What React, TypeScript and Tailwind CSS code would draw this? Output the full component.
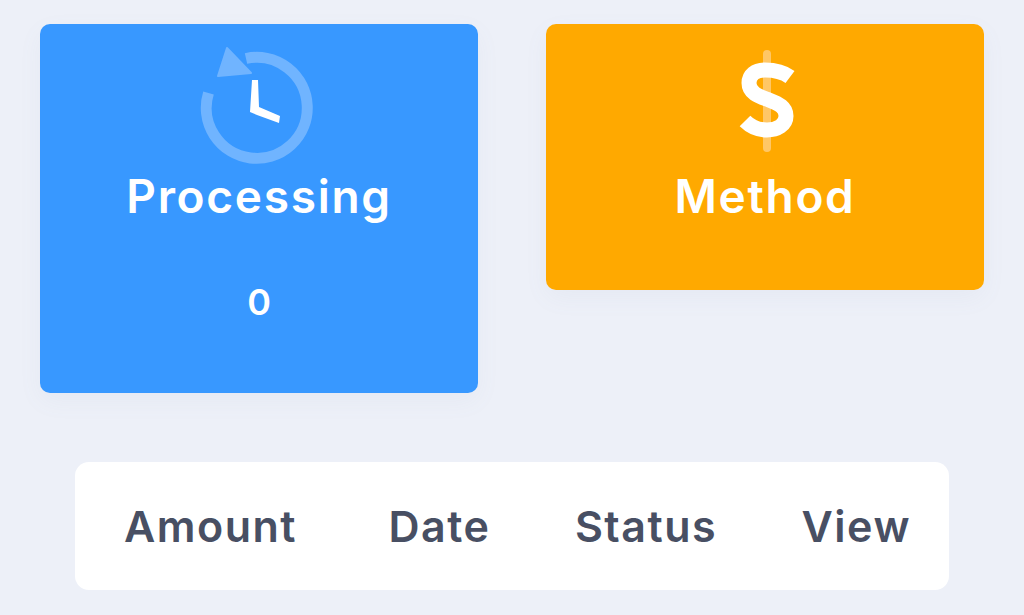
const ClockIcon = () => (
  <svg className="h-[120px] w-[120px]" viewBox="0 0 120 120" fill="none">
    <path d="M9.5 49 A50.5 50.5 0 1 0 47 14.5" stroke="#70b4ff" strokeWidth="11" />
    <path d="M28 4 L19 32 L52 29 Z" fill="#70b4ff" stroke="#70b4ff" strokeWidth="2" strokeLinejoin="round" />
    <path d="M53 36 L59 36 L60 63 L81 72 L80 79 L58 71 L51 68 Z" fill="#ffffff" />
  </svg>
);

const DollarIcon = () => (
  <svg className="h-[120px] w-[120px]" viewBox="0 0 120 120" fill="none">
    <path d="M62 10 V104" stroke="#ffc766" strokeWidth="8" strokeLinecap="round" />
    <path
      d="M85 33 C77 27 68 26 60 26 C50 26 44 31 44 39 C44 50 56 53 64 56 C74 60 81 63 81 72 C81 81 72 86 62 86 C53 86 46 83 40 77"
      stroke="#ffffff"
      strokeWidth="15"
    />
  </svg>
);

const Card = ({
  bg,
  icon,
  title,
  value
}: {
  bg: string;
  icon: React.ReactNode;
  title: string;
  value?: string;
}) => (
  <div className={`flex flex-col items-center rounded-[10px] pt-[20px] text-white shadow-[0_8px_24px_rgba(120,130,170,0.06)] ${bg}`}>
    {icon}
    <div className="mt-[1px] text-[46px] font-semibold leading-[62px] tracking-[1.7px]">{title}</div>
    {value ? (
      <div className="mt-[48px] mb-[64px] text-[36px] font-semibold leading-[54px]">{value}</div>
    ) : (
      <div className="h-[63px]" />
    )}
  </div>
);

const columns = ["Amount", "Date", "Status", "View"];

export default function App() {
  return (
    <div className="h-[615px] overflow-hidden bg-[#edf0f8] px-10 pt-[24px] font-['Inter',sans-serif]">
      <div className="grid grid-cols-2 items-start gap-x-[68px]">
        <Card bg="bg-[#3898ff]" icon={<ClockIcon />} title="Processing" value="0" />
        <Card bg="bg-[#ffa900]" icon={<DollarIcon />} title="Method" />
      </div>
      <div className="mx-[35px] mt-[69px] flex h-[128px] items-center justify-between rounded-[14px] bg-white pl-[49px] pr-[38px] text-[43px] font-semibold tracking-[1.5px] text-[#484f63]">
        {columns.map((column) => (
          <span className="first:min-w-[180px]" key={column}>
            {column}
          </span>
        ))}
      </div>
    </div>
  );
}
